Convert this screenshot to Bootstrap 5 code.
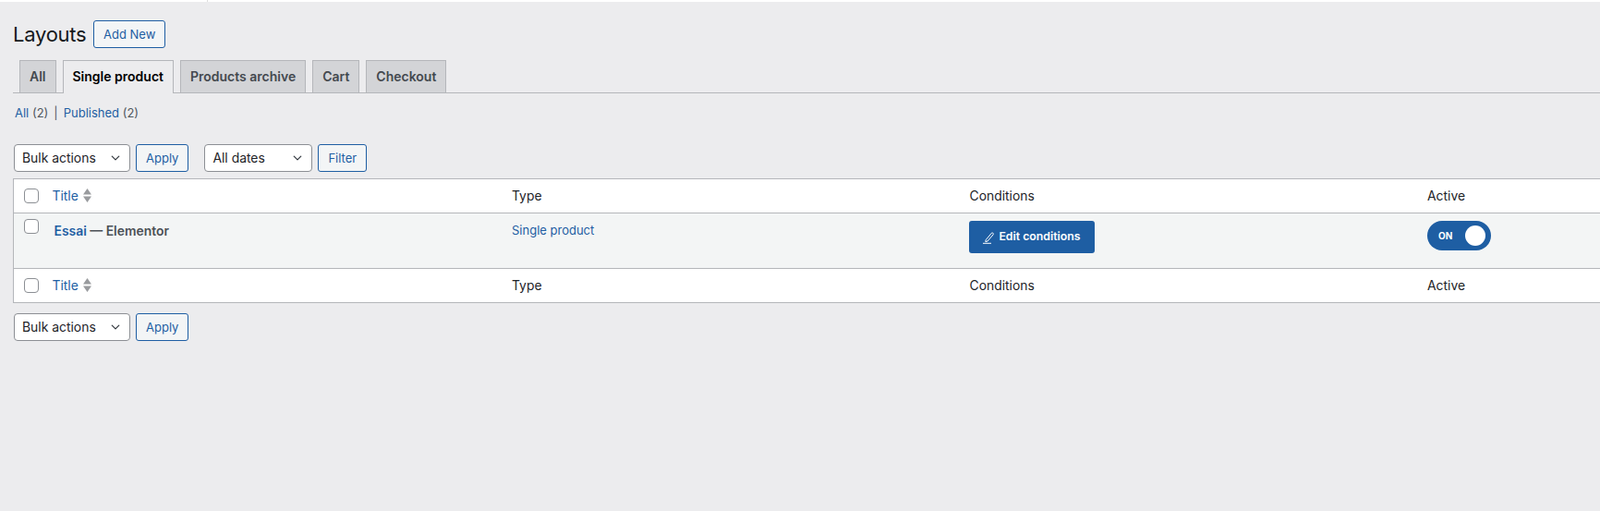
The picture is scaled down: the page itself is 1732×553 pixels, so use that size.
<!doctype html>
<html lang="en">
<head>
<meta charset="utf-8">
<title>Layouts</title>
<link rel="stylesheet" href="https://cdn.jsdelivr.net/npm/bootstrap@5.3.0/dist/css/bootstrap.min.css">
<style>
html,body{height:553px;overflow:hidden}
body{background:#ececee;font-family:Inter,"Liberation Sans",sans-serif;font-size:13px;color:#1d2327}
a{text-decoration:none;color:#1e5ea3}
.topstrip{height:2px;background:#fff;display:flex}
.topstrip i{display:block;width:1px;margin-left:224px;background:#ddd}
.wrapx{padding-left:14px}
.headrow{height:63px;padding-top:20px;gap:8px}
.headrow h1{font-size:22px;font-weight:400;margin:0;line-height:30px;letter-spacing:-.25px;color:#16191c}
.wpbtn{height:30px;font-size:13px;line-height:28px;padding:0 10px;border:1px solid #1e5ea3;border-radius:3px;color:#1e5ea3;background:#f3f5f6}
.wpbtn:hover{color:#1e5ea3;background:#f3f5f6;border-color:#1e5ea3}
.headrow .wpbtn{padding:0 9.5px}
.tabbar{height:36px;padding-left:7px;gap:7px;border-bottom:1px solid #b4b6ba}
.tabitem{height:35px;padding:0 10px;line-height:33px;font-size:14px;font-weight:600;background:#d3d4d7;border:1px solid #b4b6ba;border-bottom:0;color:#44494f}
.tabitem.cur{background:#ececee;color:#000;height:36px;margin-bottom:-1px;padding:0 10px}
.subs{height:55px;padding-top:12px;padding-left:2px;line-height:18px;color:#50575e}
.subs b{font-weight:400;padding:0 6px}
.filterbar{gap:6px;height:30px}
.pick{width:126px;height:30px;font-family:inherit;font-size:13.9px;line-height:28px;padding:0 24px 0 8px;border:1px solid #8c8f94;border-radius:4px;color:#1d2327;background-color:#fff;background-position:right 8px center;background-size:14px 10px;margin-left:1px}
.pick.narrow{width:117px;margin-left:11px}
.wptable{margin:7px 0 0;border:1px solid #b4b6ba;border-right:0;width:1760px;table-layout:fixed;background:#fff;font-size:13.9px}
.wptable td,.wptable th{border:0;padding:0 0 0 10px;font-weight:400;vertical-align:middle;box-shadow:none;background:transparent;color:#1d2327}
.wptable .ckcell{width:34px;padding:0 0 0 11px}
.wptable .ckcell .form-check-input{width:16px;height:16px;margin:0;display:block;border-color:#8c8f94;border-radius:4px}
.wptable thead tr{height:37px;border-bottom:1px solid #b4b6ba}
.wptable tfoot tr{height:37px;border-top:1px solid #b4b6ba}
.wptable tbody tr{height:60px}
.wptable tbody td{background:#f3f5f5;vertical-align:top}
.wptable tbody .ckcell .form-check-input{margin-top:6px}
.wptable thead a,.wptable tfoot a{margin-left:-2px;display:inline-flex;align-items:center;gap:5px}
.tcell{padding-top:10px!important;font-weight:600!important;color:#4b5056!important;line-height:18px}
.tcell a{font-weight:600}
.wptable td.lnk{padding-top:9px;font-size:13px;line-height:18px}
.wptable td.edcell{padding-top:8px;padding-left:9px}
.edbtn{display:inline-flex;align-items:center;gap:4px;height:35px;width:136px;justify-content:center;background:#1e5ea3;color:#fff;border:0;border-radius:3px;font-size:12.3px;font-weight:600}
.edbtn:hover{background:#1e5ea3;color:#fff}
.wptable td.swcell{padding-top:8px}
.toggle{width:69px;height:32px;border-radius:16px;background:#1e5ea3;color:#fff;font-size:10px;font-weight:700;padding:0 4px 0 12px}
.toggle i{display:block;width:22px;height:22px;border-radius:50%;background:#fff;margin-right:2px}
.bottombar{margin-top:11px}
</style>
</head>
<body>
<div class="topstrip"><i></i></div>
<div class="wrapx">
  <div class="headrow d-flex align-items-start">
    <h1>Layouts</h1>
    <a class="btn wpbtn" href="#">Add New</a>
  </div>
  <div class="tabbar d-flex align-items-end">
    <a class="tabitem" href="#">All</a>
    <a class="tabitem cur" href="#">Single product</a>
    <a class="tabitem" href="#">Products archive</a>
    <a class="tabitem" href="#">Cart</a>
    <a class="tabitem" href="#">Checkout</a>
  </div>
  <div class="subs"><a href="#">All</a> (2)<b>|</b><a href="#">Published</a> (2)</div>
  <div class="filterbar d-flex align-items-center">
    <select class="form-select pick"><option>Bulk actions</option></select>
    <a class="btn wpbtn" href="#">Apply</a>
    <select class="form-select pick narrow"><option>All dates</option></select>
    <a class="btn wpbtn" href="#">Filter</a>
  </div>
  <table class="table wptable">
    <colgroup><col style="width:34px"><col style="width:495.5px"><col style="width:495.5px"><col style="width:495.5px"><col></colgroup>
    <thead>
      <tr>
        <th class="ckcell"><input class="form-check-input" type="checkbox" aria-label="Select all"></th>
        <th><a href="#">Title
          <svg width="9" height="15" viewBox="0 0 9 15"><path d="M4.5 0 9 6.5H0zM0 8.5h9L4.5 15z" fill="#999b9e"/></svg></a></th>
        <th>Type</th><th>Conditions</th><th>Active</th>
      </tr>
    </thead>
    <tbody>
      <tr>
        <td class="ckcell"><input class="form-check-input" type="checkbox" aria-label="Select Essai"></td>
        <td class="tcell"><a href="#">Essai</a> — Elementor</td>
        <td class="lnk"><a href="#">Single product</a></td>
        <td class="edcell"><a class="btn edbtn" href="#">
          <svg width="14" height="14" viewBox="0 0 14 14" fill="none" stroke="#fff" stroke-width="1"><path d="M4.2 9.6 10.3 2.3a1 1 0 0 1 1.5-.1l.3.3a1 1 0 0 1 0 1.4L6 11l-2.2.6zM1 13.3h9"/></svg>
          Edit conditions</a></td>
        <td class="swcell"><div class="toggle d-flex align-items-center justify-content-between"><span>ON</span><i></i></div></td>
      </tr>
    </tbody>
    <tfoot>
      <tr>
        <td class="ckcell"><input class="form-check-input" type="checkbox" aria-label="Select all"></td>
        <td><a href="#">Title
          <svg width="9" height="15" viewBox="0 0 9 15"><path d="M4.5 0 9 6.5H0zM0 8.5h9L4.5 15z" fill="#999b9e"/></svg></a></td>
        <td>Type</td><td>Conditions</td><td>Active</td>
      </tr>
    </tfoot>
  </table>
  <div class="filterbar bottombar d-flex align-items-center">
    <select class="form-select pick"><option>Bulk actions</option></select>
    <a class="btn wpbtn" href="#">Apply</a>
  </div>
</div>
<script src="https://cdn.jsdelivr.net/npm/bootstrap@5.3.0/dist/js/bootstrap.bundle.min.js"></script>
</body>
</html>
